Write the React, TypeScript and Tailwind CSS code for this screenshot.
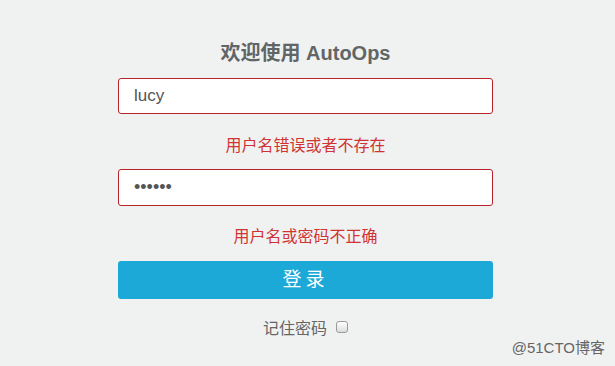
export default function App() {
  return (
    <main className="relative w-[615px] h-[366px] bg-[#f0f2f2] overflow-hidden" style={{ fontFamily: '"Liberation Sans", "Noto Sans CJK SC", sans-serif' }}>
      <div className="ml-[118px] w-[375px] pt-[39px] flex flex-col">
        <h1 className="text-center text-[20px] leading-[28px] font-bold text-[#616566]">欢迎使用 AutoOps</h1>
        <input
          defaultValue="lucy"
          className="mt-[11px] h-[36px] px-[15px] bg-white border border-[#b8232a] rounded-[3px] text-[17px] text-[#555] outline-none"
        />
        <p className="mt-[21px] h-[22px] leading-[22px] text-center text-[16px] text-[#d03432]">用户名错误或者不存在</p>
        <input
          type="password"
          defaultValue="123456"
          className="mt-[12px] h-[37px] px-[15px] bg-white border border-[#b8232a] rounded-[3px] text-[18px] text-[#555] outline-none"
        />
        <p className="mt-[20px] h-[22px] leading-[22px] text-center text-[16px] text-[#d03432]">用户名或密码不正确</p>
        <button className="mt-[13px] h-[38px] bg-[#1da9d7] rounded-[3px] text-white text-[19px] tracking-[4px]">登录</button>
        <label className="mt-[18px] flex items-center justify-center gap-[9px] text-[16px] text-[#666]">
          <span>记住密码</span>
          <span className="w-[12px] h-[12px] -mt-[4px] rounded-[3px] border border-[#9a9a9a] bg-gradient-to-b from-white to-[#dcdcdc]" />
        </label>
      </div>
      <div className="absolute right-[10px] bottom-[7px] text-[15px] text-[#666]">@51CTO博客</div>
    </main>
  )
}
